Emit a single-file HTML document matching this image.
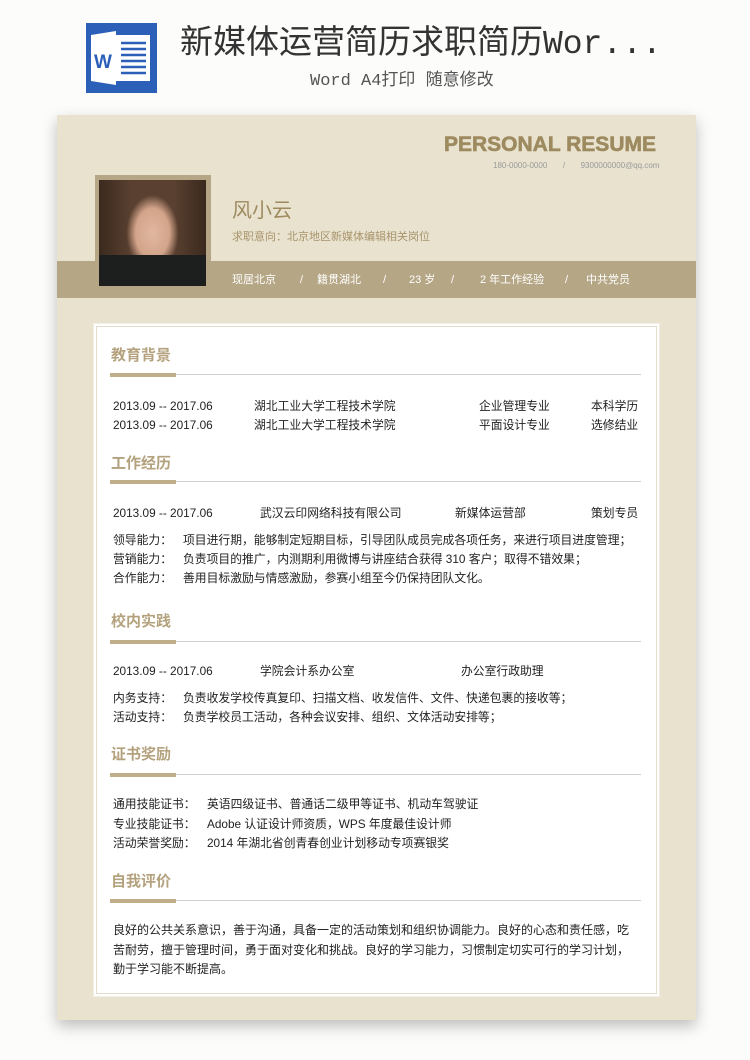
<!DOCTYPE html>
<html><head><meta charset="utf-8">
<style>
*{margin:0;padding:0;box-sizing:border-box}
body{width:750px;height:1060px;background:#fcfcfa;position:relative;overflow:hidden;font-family:"Liberation Sans","Noto Sans CJK SC",sans-serif;color:#222}
.a{position:absolute;white-space:nowrap}
.t{font-size:11.8px;line-height:18px}
.h{font-size:15px;font-weight:bold;color:#b4a27e;line-height:20px;left:111px}
.bar{position:absolute;left:110px;width:66px;height:4px;background:#c0ae8a}
.ln{position:absolute;left:110px;width:531px;height:1px;background:#cfcfcf}
.w{color:#fff;font-size:11px;line-height:14px;top:273px}
</style></head><body>
<svg class="a" style="left:86px;top:23px" width="71" height="70" viewBox="0 0 71 70">
<rect width="71" height="70" fill="#2b5fb8"/>
<rect x="30" y="12" width="34" height="46" fill="#fff"/>
<g stroke="#2b5fb8" stroke-width="2.5"><line x1="35" y1="20" x2="60" y2="20"/><line x1="35" y1="26" x2="60" y2="26"/><line x1="35" y1="32" x2="60" y2="32"/><line x1="35" y1="38" x2="60" y2="38"/><line x1="35" y1="44" x2="60" y2="44"/><line x1="35" y1="50" x2="60" y2="50"/></g>
<polygon points="5,12 30,8 30,62 5,58" fill="#fff"/>
<text x="8" y="45" font-family="Liberation Sans" font-weight="bold" font-size="19" fill="#2b5fb8">W</text>
</svg>
<div class="a" style="left:180px;top:24px;font-size:33px;line-height:42px;color:#333;font-family:'Liberation Mono','Noto Sans CJK SC',monospace">新媒体运营简历求职简历Wor...</div>
<div class="a" style="left:310px;top:71px;font-size:17px;line-height:22px;color:#555;font-family:'Liberation Mono','Noto Sans CJK SC',monospace">Word A4打印 随意修改</div>

<div class="a" style="left:57px;top:115px;width:639px;height:905px;background:#e8e2cf;box-shadow:0 6px 14px rgba(0,0,0,.25)"></div>
<div class="a" style="left:57px;top:261px;width:639px;height:37px;background:#b5a685"></div>
<div class="a" style="left:444px;top:131px;font-size:21px;font-weight:bold;color:#9e8a5f;line-height:28px;-webkit-text-stroke:0.6px #9e8a5f">PERSONAL RESUME</div>
<div class="a" style="left:493px;top:161px;font-size:8px;color:#999;line-height:10px">180-0000-0000 &nbsp; &nbsp; &nbsp; / &nbsp; &nbsp; &nbsp; 9300000000@qq.com</div>
<div class="a" style="left:95px;top:175px;width:116px;height:113px;background:#b5a685"></div>
<div class="a" style="left:99px;top:180px;width:107px;height:106px;background:radial-gradient(ellipse 26px 38px at 50% 50%,#e0b8a0 0,#d3a48a 65%,rgba(80,50,30,0) 100%),linear-gradient(90deg,#3a2a1e 0,#5a4030 30%,#5a4030 70%,#3a2a1e 100%)"></div>
<div class="a" style="left:99px;top:255px;width:107px;height:31px;background:#1d1f1e"></div>
<div class="a" style="left:232px;top:198px;font-size:20px;color:#9e8a5f;line-height:26px">风小云</div>
<div class="a" style="left:232px;top:230px;font-size:11px;color:#a8946c;line-height:14px">求职意向：北京地区新媒体编辑相关岗位</div>
<div class="a w" style="left:232px">现居北京</div><div class="a w" style="left:300px">/</div>
<div class="a w" style="left:317px">籍贯湖北</div><div class="a w" style="left:383px">/</div>
<div class="a w" style="left:409px">23 岁</div><div class="a w" style="left:451px">/</div>
<div class="a w" style="left:480px">2 年工作经验</div><div class="a w" style="left:565px">/</div>
<div class="a w" style="left:586px">中共党员</div>

<div class="a" style="left:93px;top:323px;width:567px;height:674px;background:#fff;border:1px solid #f2eee4"></div>
<div class="a" style="left:96px;top:326px;width:561px;height:668px;border:1px solid #e4ddca"></div>

<div class="a h" style="top:346px">教育背景</div><div class="ln" style="top:374px"></div><div class="bar" style="top:373px"></div>
<div class="a t" style="left:113px;top:397px">2013.09 -- 2017.06</div><div class="a t" style="left:254px;top:397px">湖北工业大学工程技术学院</div><div class="a t" style="left:479px;top:397px">企业管理专业</div><div class="a t" style="left:591px;top:397px">本科学历</div>
<div class="a t" style="left:113px;top:416px">2013.09 -- 2017.06</div><div class="a t" style="left:254px;top:416px">湖北工业大学工程技术学院</div><div class="a t" style="left:479px;top:416px">平面设计专业</div><div class="a t" style="left:591px;top:416px">选修结业</div>

<div class="a h" style="top:454px">工作经历</div><div class="ln" style="top:481px"></div><div class="bar" style="top:480px"></div>
<div class="a t" style="left:113px;top:504px">2013.09 -- 2017.06</div><div class="a t" style="left:260px;top:504px">武汉云印网络科技有限公司</div><div class="a t" style="left:455px;top:504px">新媒体运营部</div><div class="a t" style="left:591px;top:504px">策划专员</div>
<div class="a t" style="left:113px;top:531px">领导能力：</div><div class="a t" style="left:183px;top:531px">项目进行期，能够制定短期目标，引导团队成员完成各项任务，来进行项目进度管理；</div>
<div class="a t" style="left:113px;top:550px">营销能力：</div><div class="a t" style="left:183px;top:550px">负责项目的推广，内测期利用微博与讲座结合获得 310 客户；取得不错效果；</div>
<div class="a t" style="left:113px;top:569px">合作能力：</div><div class="a t" style="left:183px;top:569px">善用目标激励与情感激励，参赛小组至今仍保持团队文化。</div>

<div class="a h" style="top:612px">校内实践</div><div class="ln" style="top:641px"></div><div class="bar" style="top:640px"></div>
<div class="a t" style="left:113px;top:662px">2013.09 -- 2017.06</div><div class="a t" style="left:260px;top:662px">学院会计系办公室</div><div class="a t" style="left:461px;top:662px">办公室行政助理</div>
<div class="a t" style="left:113px;top:689px">内务支持：</div><div class="a t" style="left:183px;top:689px">负责收发学校传真复印、扫描文档、收发信件、文件、快递包裹的接收等；</div>
<div class="a t" style="left:113px;top:708px">活动支持：</div><div class="a t" style="left:183px;top:708px">负责学校员工活动，各种会议安排、组织、文体活动安排等；</div>

<div class="a h" style="top:745px">证书奖励</div><div class="ln" style="top:774px"></div><div class="bar" style="top:773px"></div>
<div class="a t" style="left:113px;top:795px">通用技能证书：</div><div class="a t" style="left:207px;top:795px">英语四级证书、普通话二级甲等证书、机动车驾驶证</div>
<div class="a t" style="left:113px;top:815px">专业技能证书：</div><div class="a t" style="left:207px;top:815px">Adobe 认证设计师资质，WPS 年度最佳设计师</div>
<div class="a t" style="left:113px;top:834px">活动荣誉奖励：</div><div class="a t" style="left:207px;top:834px">2014 年湖北省创青春创业计划移动专项赛银奖</div>

<div class="a h" style="top:872px">自我评价</div><div class="ln" style="top:900px"></div><div class="bar" style="top:899px"></div>
<div class="a" style="left:113px;top:921px;width:522px;white-space:normal;font-size:12px;line-height:19.5px">良好的公共关系意识，善于沟通，具备一定的活动策划和组织协调能力。良好的心态和责任感，吃<br>苦耐劳，擅于管理时间，勇于面对变化和挑战。良好的学习能力，习惯制定切实可行的学习计划，<br>勤于学习能不断提高。</div>
</body></html>
